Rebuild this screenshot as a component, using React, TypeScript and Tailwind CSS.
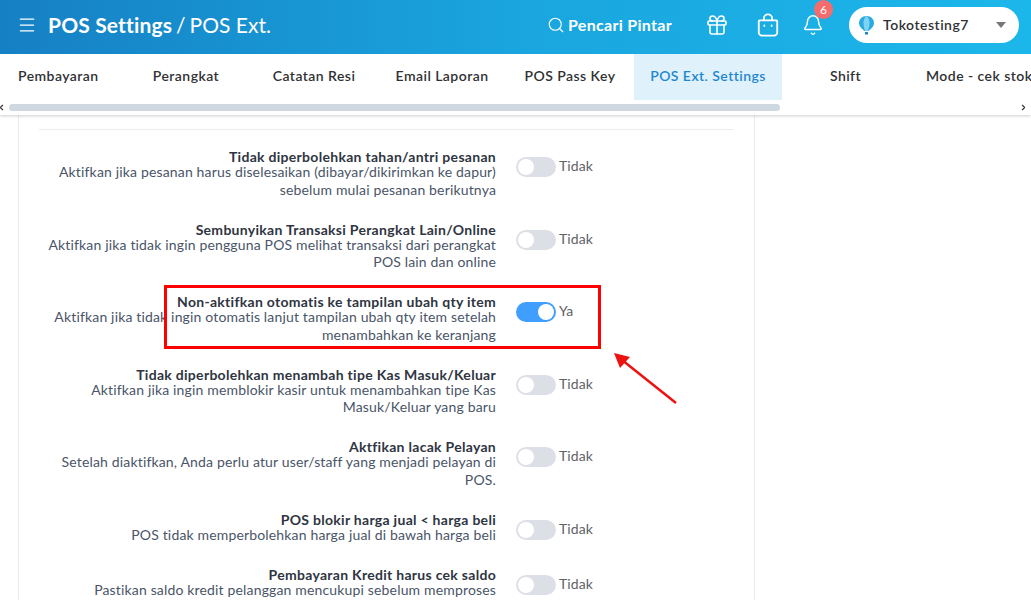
import { Gift, Bell, Search, Menu, ChevronLeft, ChevronRight } from "lucide-react";

const tabs = [
  { label: "Perangkat", width: "w-[128px]" },
  { label: "Catatan Resi", width: "w-[128px]" },
  { label: "Email Laporan", width: "w-[128px]" },
  { label: "POS Pass Key", width: "w-[128px]" },
];

const settings = [
  {
    title: "Tidak diperbolehkan tahan/antri pesanan",
    lines: ["Aktifkan jika pesanan harus diselesaikan (dibayar/dikirimkan ke dapur)", "sebelum mulai pesanan berikutnya"],
    on: false,
  },
  {
    title: "Sembunyikan Transaksi Perangkat Lain/Online",
    lines: ["Aktifkan jika tidak ingin pengguna POS melihat transaksi dari perangkat", "POS lain dan online"],
    on: false,
  },
  {
    title: "Non-aktifkan otomatis ke tampilan ubah qty item",
    lines: ["Aktifkan jika tidak ingin otomatis lanjut tampilan ubah qty item setelah", "menambahkan ke keranjang"],
    on: true,
  },
  {
    title: "Tidak diperbolehkan menambah tipe Kas Masuk/Keluar",
    lines: ["Aktifkan jika ingin memblokir kasir untuk menambahkan tipe Kas", "Masuk/Keluar yang baru"],
    on: false,
  },
  {
    title: "Aktfikan lacak Pelayan",
    lines: ["Setelah diaktifkan, Anda perlu atur user/staff yang menjadi pelayan di", "POS."],
    on: false,
  },
  {
    title: "POS blokir harga jual < harga beli",
    lines: ["POS tidak memperbolehkan harga jual di bawah harga beli"],
    on: false,
  },
  {
    title: "Pembayaran Kredit harus cek saldo",
    lines: ["Pastikan saldo kredit pelanggan mencukupi sebelum memproses"],
    on: false,
  },
];

function Toggle({ on }: { on: boolean }) {
  return (
    <div className="flex items-center">
      <div className={`w-10 h-5 rounded-full flex items-center px-0.5 ${on ? "bg-[#409eff] justify-end" : "bg-[#dcdfe6] justify-start"}`}>
        <div className="w-4 h-4 rounded-full bg-white" />
      </div>
      <span className="ml-[3px] text-[#606266] -mt-[2px] tracking-[0.1px]">{on ? "Ya" : "Tidak"}</span>
    </div>
  );
}

export default function App() {
  return (
    <div className="relative w-[1031px] h-[600px] overflow-hidden bg-white text-[14px] leading-[17.5px] font-['Lato','Noto_Sans',sans-serif]">
      {/* Top bar */}
      <header className="relative z-20 h-[54px] pb-[5px] flex items-center bg-gradient-to-r from-[#1680c4] via-[#1aa5de] to-[#1cb7ea] text-white">
        <Menu className="ml-[17px] w-[20px] h-[20px]" strokeWidth={1.5} />
        <div className="ml-[11px] text-[21px] flex">
          <span className="font-bold tracking-[0.15px]">POS Settings</span>
          <span className="ml-[4px]">/</span>
          <span className="ml-[4px]">POS Ext.</span>
        </div>
        <div className="ml-auto flex items-center">
          <Search className="w-[18px] h-[18px]" strokeWidth={1.5} />
          <span className="ml-[3px] text-[16px] font-bold tracking-[0.3px]">Pencari Pintar</span>
        </div>
        <Gift className="ml-[33px] w-[24px] h-[24px]" strokeWidth={1.6} />
        <svg className="ml-[27px] w-[24px] h-[24px]" viewBox="0 0 24 26" fill="none" stroke="white" strokeWidth="2">
          <path d="M3 8h18a1 1 0 0 1 1 1v12a3.500 3.500 0 0 1-3.500 3.500h-13A3.500 3.500 0 0 1 2 21V9a1 1 0 0 1 1-1z" />
          <path d="M7.500 8V6a4.500 4.500 0 0 1 9 0v2" />
          <path d="M8 13.500v.500M16 13.500v.500" strokeLinecap="round" />
        </svg>
        <div className="relative ml-[22px]">
          <Bell className="w-[22px] h-[24px]" strokeWidth={1.6} />
          <span className="absolute -top-[13px] left-[12px] w-[19px] h-[19px] rounded-full bg-[#f56c6c] text-[12px] leading-[19px] text-center">6</span>
        </div>
        <div className="ml-[25px] mr-[12px] w-[170px] h-[36px] rounded-full bg-white flex items-center pl-[9px] pr-[13px] text-[#303133]">
          <svg className="w-[17px] h-[20px]" viewBox="0 0 17 20">
            <path d="M8.500 1C4 1 1 4.300 1 8c0 3.500 3.500 6.500 5.500 8h4c2-1.500 5.500-4.500 5.500-8 0-3.700-3-7-7.500-7z" fill="#29abe2" />
            <path d="M8.500 1C6.500 2.500 5.500 5 5.500 8c0 3 1 6 1.500 8h3c.5-2 1.500-5 1.500-8 0-3-1-5.500-3-7z" fill="#7fd4f4" />
            <rect x="7" y="17" width="3" height="2.500" rx="0.500" fill="#1680c4" />
          </svg>
          <span className="ml-[8px] text-[14px] font-semibold tracking-[0.5px]">Tokotesting7</span>
          <span className="ml-auto w-0 h-0 border-x-[5px] border-x-transparent border-t-[6px] border-t-[#777]" />
        </div>
      </header>

      {/* Tab strip */}
      <nav className="relative z-10 h-[61px] bg-white shadow-[0_1px_3px_rgba(0,0,0,0.2)] text-[14px] font-semibold text-[#303133] tracking-[0.45px]">
        <div className="flex h-[46px] items-start leading-[44px]">
          <div className="w-[122px] pl-[18px] shrink-0">Pembayaran</div>
          {tabs.map((tab) => (
            <div key={tab.label} className={`${tab.width} shrink-0 text-center`}>{tab.label}</div>
          ))}
          <div className="w-[148px] h-[46px] shrink-0 text-center bg-[#dff1fa] text-[#1f87cf]">POS Ext. Settings</div>
          <div className="w-[127px] shrink-0 text-center">Shift</div>
          <div className="pl-[17px] shrink-0 whitespace-nowrap">Mode - cek stok</div>
        </div>
        <div className="flex items-center h-[15px] pb-[1px]">
          <ChevronLeft className="w-[9px] h-[9px] -ml-[3px] text-[#333]" strokeWidth={3} />
          <div className="ml-[3px] w-[771px] h-[7px] rounded-full bg-[#cfd8e0]" />
          <ChevronRight className="ml-auto mr-[3px] w-[9px] h-[9px] text-[#333]" strokeWidth={3} />
        </div>
      </nav>

      {/* Settings card */}
      <main className="ml-[18px] w-[737px] h-[485px] border-x border-[#ececec] pt-[14px] px-[20px]">
        <div className="border-t border-[#ececec] pt-[19px]">
          {settings.map((item) => (
            <div key={item.title} className="flex pb-[23.5px]">
              <div className="w-[457px] text-right whitespace-nowrap text-[#4a5568] tracking-[0.16px]">
                <div className="font-bold text-[#2f3542] leading-[16px] -mb-[2px] tracking-[0.29px]">{item.title}</div>
                {item.lines.map((line) => (
                  <div key={line}>{line}</div>
                ))}
              </div>
              <div className="ml-[20px] mt-[8px]">
                <Toggle on={item.on} />
              </div>
            </div>
          ))}
        </div>
      </main>

      {/* Annotation */}
      <div className="absolute left-[164px] top-[285px] w-[437px] h-[64px] border-[3px] border-[#ff0000]" />
      <svg className="absolute left-[610px] top-[348px] w-[70px] h-[60px]" viewBox="0 0 70 60" fill="none">
        <path d="M66 55 L12 12" stroke="#ee1111" strokeWidth="2.500" />
        <path d="M4 5 L20 9 L10 20 Z" fill="#ee1111" />
      </svg>
    </div>
  );
}
